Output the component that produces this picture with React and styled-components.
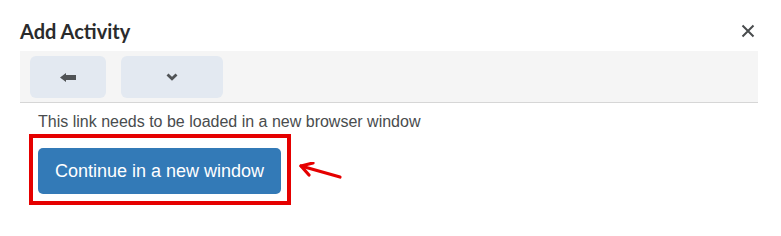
import React from "react";
import styled, { createGlobalStyle } from "styled-components";

const Global = createGlobalStyle`
  html, body { margin: 0; padding: 0; background: #ffffff; }
  body { font-family: "Liberation Sans", Arial, sans-serif; }
`;

const Dialog = styled.div`
  width: 781px;
  height: 236px;
  background: #ffffff;
  box-sizing: border-box;
`;

const Header = styled.div`
  display: flex;
  align-items: center;
  justify-content: space-between;
  height: 51px;
  padding: 0 25px 0 20px;
  box-sizing: border-box;
`;

const Title = styled.h1`
  margin: 0;
  font-family: Lato, "Noto Sans", sans-serif;
  font-weight: 700;
  font-size: 20px;
  color: #2a2b2c;
  line-height: 1;
  padding-top: 10px;
`;

const CloseButton = styled.button`
  display: flex;
  align-items: center;
  justify-content: center;
  width: 16px;
  height: 16px;
  padding: 0;
  margin-top: 10px;
  border: none;
  background: transparent;
  color: #494c4e;
`;

const Toolbar = styled.div`
  display: flex;
  gap: 15px;
  margin: 0 23px 0 20px;
  padding: 5px 10px 4px;
  background: #f5f5f5;
  border-bottom: 1px solid #d6d6d6;
`;

const ToolButton = styled.button`
  display: flex;
  align-items: center;
  justify-content: center;
  width: ${(p) => p.$w}px;
  height: 42px;
  padding: 0;
  border: none;
  border-radius: 6px;
  background: #e3e9f1;
  color: #505356;
`;

const Body = styled.div`
  padding: 9px 0 0 29px;
`;

const Message = styled.p`
  margin: 0 0 0 9px;
  font-size: 16px;
  line-height: 19px;
  color: #494c4e;
`;

const Row = styled.div`
  display: flex;
  align-items: flex-start;
  margin-top: 3px;
`;

const Highlight = styled.div`
  display: inline-block;
  border: 4px solid #e50000;
  padding: 10px 6px 7px 5px;
`;

const PrimaryButton = styled.button`
  display: block;
  width: 243px;
  height: 46px;
  padding: 0;
  border: none;
  border-radius: 5px;
  background: #337ab7;
  color: #ffffff;
  font-family: "Liberation Sans", Arial, sans-serif;
  font-size: 18px;
`;

const Pointer = styled.svg`
  margin: 28px 0 0 8px;
`;

export default function App() {
  return (
    <>
      <Global />
      <Dialog>
        <Header>
          <Title>Add Activity</Title>
          <CloseButton aria-label="Close">
            <svg width="14" height="14" viewBox="0 0 14 14">
              <path d="M1.5 1.5 L12.5 12.5 M12.5 1.5 L1.5 12.5" stroke="currentColor" strokeWidth="2" fill="none" />
            </svg>
          </CloseButton>
        </Header>
        <Toolbar>
          <ToolButton $w={76} aria-label="Back">
            <svg width="16" height="9" viewBox="0 0 16 9">
              <path d="M0 4.5 L6 0 L6 2 L16 2 L16 7 L6 7 L6 9 Z" fill="currentColor" />
            </svg>
          </ToolButton>
          <ToolButton $w={102} aria-label="More">
            <svg width="12" height="8" viewBox="0 0 12 8">
              <path d="M1.5 1.5 L6 5.8 L10.5 1.5" stroke="currentColor" strokeWidth="2.8" fill="none" />
            </svg>
          </ToolButton>
        </Toolbar>
        <Body>
          <Message>This link needs to be loaded in a new browser window</Message>
          <Row>
            <Highlight>
              <PrimaryButton>Continue in a new window</PrimaryButton>
            </Highlight>
            <Pointer width="44" height="20" viewBox="0 0 44 20">
              <path d="M2 4 L41 15" stroke="#e50000" strokeWidth="3.2" strokeLinecap="round" fill="none" />
              <path d="M14 1 L2 4 L10 13" stroke="#e50000" strokeWidth="3.2" strokeLinecap="round" strokeLinejoin="round" fill="none" />
            </Pointer>
          </Row>
        </Body>
      </Dialog>
    </>
  );
}
